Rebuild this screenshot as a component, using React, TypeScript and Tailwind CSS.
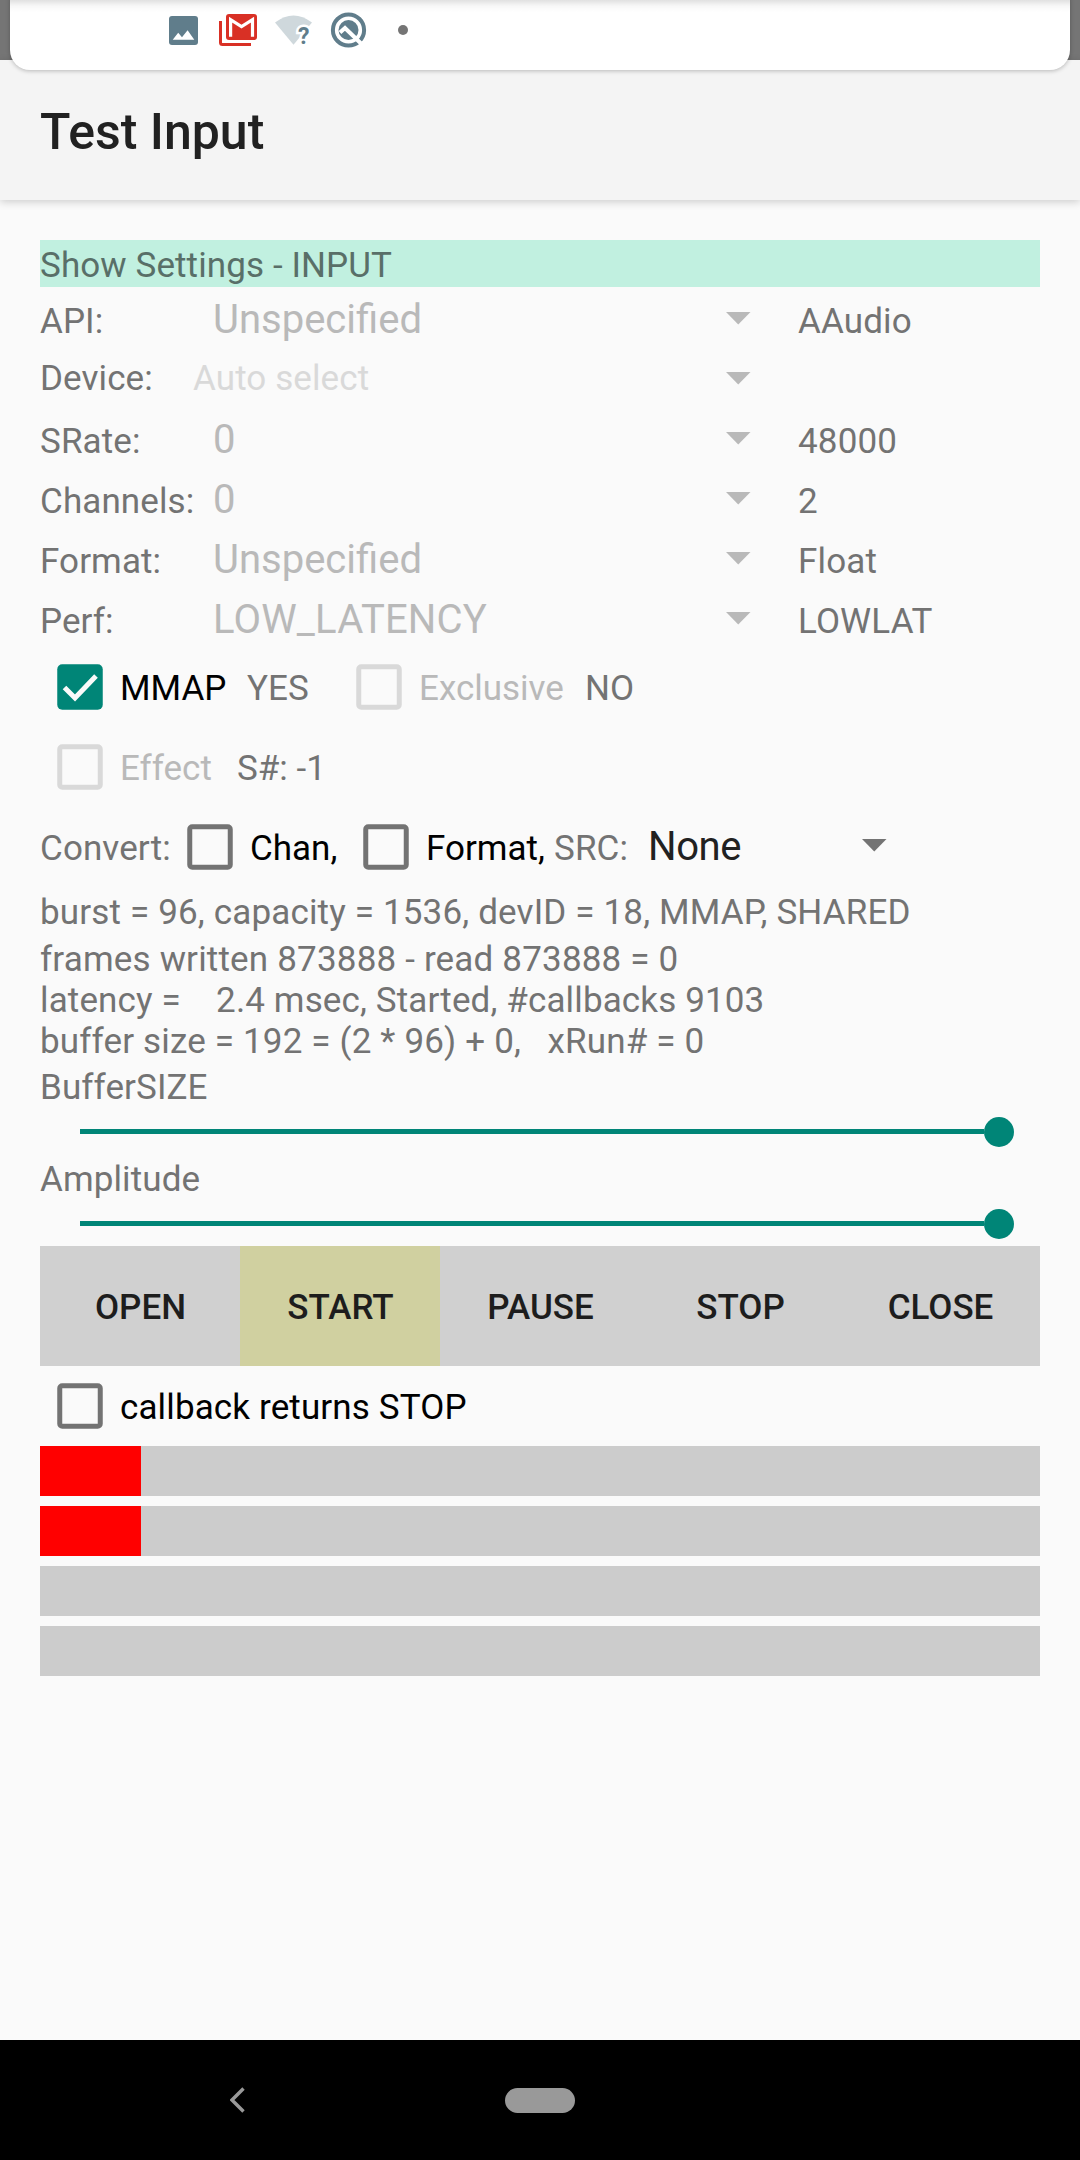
import type { ReactNode } from "react";

function Arrow({ className = "" }: { className?: string }) {
  return (
    <svg width="25" height="13" viewBox="0 0 25 13" className={`shrink-0 ${className}`}>
      <path d="M0 0H24.5L12.25 12.5Z" fill="currentColor" />
    </svg>
  );
}

function Check({ checked = false, color = "#737373" }: { checked?: boolean; color?: string }) {
  return (
    <svg width="80" height="80" viewBox="0 0 80 80" className="shrink-0">
      {checked ? (
        <>
          <rect x="17.25" y="17.25" width="45.5" height="45.5" rx="5" fill="#008577" />
          <path d="M24.5 40.5L35 51L56 29" fill="none" stroke="#fafafa" strokeWidth="5" />
        </>
      ) : (
        <rect x="19.75" y="19.75" width="40.5" height="40.5" rx="2.5" fill="none" stroke={color} strokeWidth="5" />
      )}
    </svg>
  );
}

function Option({ label, width, tone = "text-black", box, checked }: { label: string; width: string; tone?: string; box?: string; checked?: boolean }) {
  return (
    <label className={`flex h-20 shrink-0 whitespace-nowrap ${width} ${tone}`}>
      <Check checked={checked} color={box} />
      <span>{label}</span>
    </label>
  );
}

const settings = [
  { label: "API:", value: "Unspecified", actual: "AAudio" },
  { label: "Device:", value: "Auto select", actual: "", auto: true },
  { label: "SRate:", value: "0", actual: "48000" },
  { label: "Channels:", value: "0", actual: "2" },
  { label: "Format:", value: "Unspecified", actual: "Float" },
  { label: "Perf:", value: "LOW_LATENCY", actual: "LOWLAT", wide: true },
];

function StatusBar() {
  return (
    <div className="h-[60px] bg-[#757575]">
      <div className="absolute -top-5 left-[10px] h-[90px] w-[1060px] rounded-[20px] bg-white shadow-[0_1px_4px_rgba(0,0,0,0.25)]">
        <div className="mt-5 h-3 bg-gradient-to-b from-black/12 via-black/3 to-transparent" />
      </div>
      <svg width="260" height="60" viewBox="160 0 260 60" className="relative ml-[160px]">
        <rect x="169" y="16" width="29" height="29" rx="3" fill="#607d8b" />
        <path d="M172.7 39.8L178.2 32.7L182 37.3L187.6 30.3L194.3 39.8Z" fill="#fff" />
        <path d="M220.5 21V42.5Q220.5 44.5 222.5 44.5H251" fill="none" stroke="#d93025" strokeWidth="3" />
        <rect x="226" y="14" width="31" height="26" rx="3" fill="#d93025" />
        <path d="M230.6 36.8V19.6L241.5 26.6L252.5 19.6V36.8" fill="none" stroke="#fff" strokeWidth="3.2" />
        <path d="M275 22.5Q293.5 8.5 312 22.5L293.5 44.7Z" fill="#cfd8dc" />
        <text x="298" y="44" fontSize="23" fontWeight="700" fill="#607d8b" stroke="#fff" strokeWidth="5" paintOrder="stroke">?</text>
        <circle cx="348.5" cy="30" r="15.6" fill="none" stroke="#607d8b" strokeWidth="4" />
        <circle cx="348.5" cy="30" r="10" fill="#607d8b" />
        <path d="M340 32.5L345 28L361 43.5" fill="none" stroke="#fff" strokeWidth="4" />
        <circle cx="403" cy="30" r="5" fill="#757575" />
      </svg>
    </div>
  );
}

function Slider({ label }: { label: string }) {
  return (
    <div>
      <div className="h-[47px] leading-[52px] tracking-[0.1px]">{label}</div>
      <div className="flex h-[45px] items-center pl-10">
        <div className="h-[5px] w-[904px] bg-[#008577]" />
        <div className="size-[30px] rounded-full bg-[#008577]" />
      </div>
    </div>
  );
}

function Transport({ children, active = false }: { children: ReactNode; active?: boolean }) {
  return (
    <button className={`h-[120px] flex-1 pl-px text-center font-medium leading-[124px] text-[#1d1d1d] ${active ? "bg-[#d0d0a0]" : "bg-[#d0d0d0]"}`}>
      {children}
    </button>
  );
}

export default function App() {
  return (
    <div className="relative flex h-[2160px] w-[1080px] flex-col overflow-hidden bg-[#fafafa] font-['Roboto',sans-serif] text-[35px] text-[#737373]">
      <StatusBar />
      <header className="h-[140px] shrink-0 bg-[#f4f4f4] pl-10 text-[50px] font-medium leading-[144px] text-[#212121] shadow-[0_2px_8px_rgba(0,0,0,0.18)]">
        Test Input
      </header>
      <main className="flex-1 px-10 pt-10">
        <div className="h-[47px] bg-[#c1f0e0] leading-[52px] tracking-[0.1px] text-[#596f68]">Show Settings - INPUT</div>
        {settings.map((s) => (
          <div key={s.label} className={`flex h-[60px] ${s.auto ? "leading-[64px]" : "leading-[70px]"}`}>
            <div className="w-[153px] shrink-0 tracking-[0.1px]">{s.label}</div>
            <div className={`w-[533px] ${s.auto ? "tracking-[0.1px] text-[#d9d9d9]" : "pl-5 text-[40px] leading-[65px] text-[#b9b9b9]"} ${s.wide ? "tracking-[0.18px]" : ""}`}>{s.value}</div>
            <Arrow className="mt-[25px] text-[#b9b9b9]" />
            <div className="ml-[47px] tracking-[0.15px]">{s.actual}</div>
          </div>
        ))}
        <div className="flex h-20 leading-[84px]">
          <Option label="MMAP" width="w-[207px]" checked />
          <span className="w-[92px]">YES</span>
          <Option label="Exclusive" width="w-[246px]" tone="text-[#b9b9b9]" box="#d9d9d9" />
          <span>NO</span>
        </div>
        <div className="flex h-20 leading-[84px]">
          <Option label="Effect" width="w-[197px]" tone="text-[#b9b9b9]" box="#d9d9d9" />
          <span>S#: -1</span>
        </div>
        <div className="flex h-20 leading-[84px]">
          <span className="w-[130px] tracking-[0.1px]">Convert:</span>
          <Option label="Chan," width="w-[176px]" />
          <Option label="Format," width="w-[208px]" />
          <span className="w-[94px] tracking-[0.1px]">SRC:</span>
          <span className="w-[214px] text-[40px] leading-[80px] tracking-[-0.4px] text-[#212121]">None</span>
          <Arrow className="mt-8" />
        </div>
        <div className="h-[47px] whitespace-pre leading-[52px] tracking-[0.16px]">burst = 96, capacity = 1536, devID = 18, MMAP, SHARED</div>
        <div className="h-[128px] whitespace-pre pt-[5px] leading-[41px]">
          <div className="tracking-[0.18px]">frames written 873888 - read 873888 = 0</div>
          <div className="tracking-[0.13px]">{"latency =    2.4 msec, Started, #callbacks 9103"}</div>
          <div className="tracking-[0.16px]">{"buffer size = 192 = (2 * 96) + 0,   xRun# = 0"}</div>
        </div>
        <Slider label="BufferSIZE" />
        <Slider label="Amplitude" />
        <div className="flex">
          <Transport>OPEN</Transport>
          <Transport active>START</Transport>
          <Transport>PAUSE</Transport>
          <Transport>STOP</Transport>
          <Transport>CLOSE</Transport>
        </div>
        <div className="h-20 leading-[84px] tracking-[0.13px]">
          <Option label="callback returns STOP" width="w-full" />
        </div>
        <div className="flex flex-col gap-2.5">
          {[101, 101, 0, 0].map((level, i) => (
            <div key={i} className="h-[50px] bg-[#ccc]">
              <div className="h-full bg-[#f00]" style={{ width: level }} />
            </div>
          ))}
        </div>
      </main>
      <nav className="flex h-[120px] shrink-0 items-center bg-black">
        <svg width="16" height="26" viewBox="0 0 16 26" className="ml-[230px]">
          <path d="M13.5 1.5L2 13L13.5 24.5" fill="none" stroke="#999" strokeWidth="3.4" />
        </svg>
        <div className="ml-[259px] h-[25px] w-[70px] rounded-full bg-[#999]" />
      </nav>
    </div>
  );
}
